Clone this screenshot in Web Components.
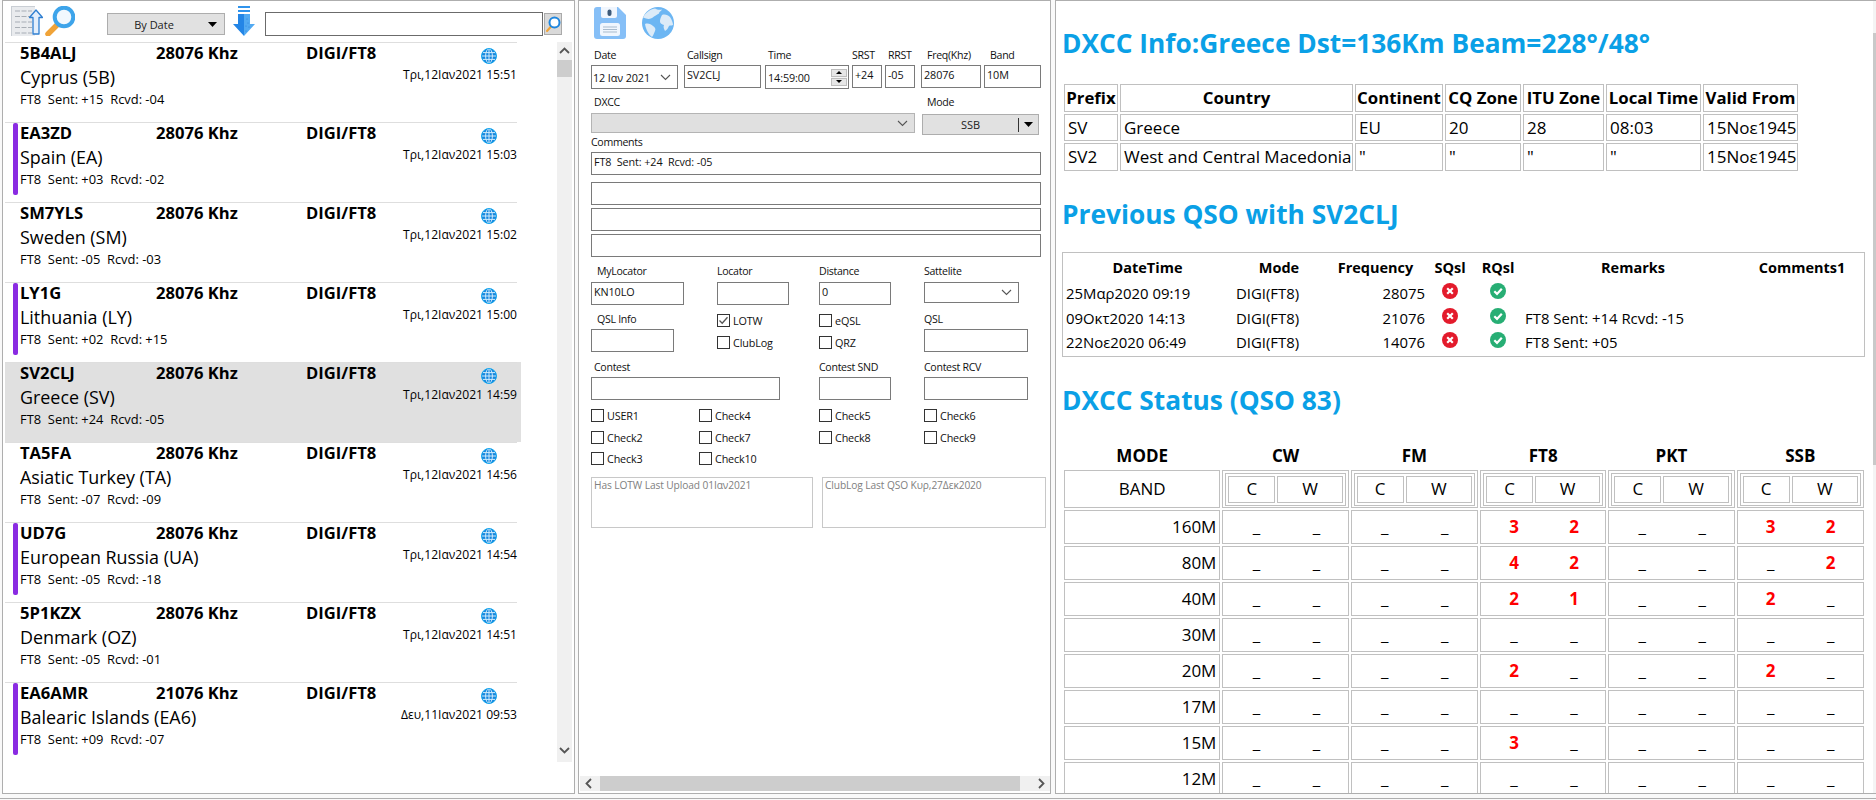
<!doctype html>
<html lang="el"><head><meta charset="utf-8"><title>QSO</title>
<style>
html,body{margin:0;padding:0}
body{width:1876px;height:800px;overflow:hidden;background:#f9f9f9;font-family:"Open Sans","Noto Sans","DejaVu Sans",sans-serif;color:#000}
</style></head><body>
<qso-app></qso-app>
<script>
const ICONS={
 globe:`<svg width="16" height="16" viewBox="0 0 16 16"><circle cx="8" cy="8" r="7.5" fill="#1587de"/><g fill="none" stroke="#cfeafc" stroke-width="1"><ellipse cx="8" cy="8" rx="3.4" ry="7.3"/><path d="M8 .5v15M.8 8h14.4M1.7 4.6h12.6M1.7 11.4h12.6"/></g><circle cx="8" cy="8" r="7.5" fill="none" stroke="#18a8ee" stroke-width="1"/></svg>`,
 doc:`<svg width="32" height="30" viewBox="0 0 32 30"><path d="M0 0h24v30H0z" fill="#e9ebee"/><path d="M0 0h24v1H0zM0 0h1v30H0z" fill="#c9ced4"/><g stroke="#a8aeb5" stroke-width="1.2" stroke-dasharray="5 1.5"><path d="M4 5h17M4 10.500h17M4 16h17M4 21.500h17M4 27h17"/></g><path d="M25 4l6.500 7.500h-3.500V28h-6V11.500h-3.500z" fill="#e3eefb" stroke="#2f7fd1" stroke-width="1.300" stroke-linejoin="round"/></svg>`,
 lens:`<svg width="30" height="30" viewBox="0 0 30 30"><path d="M3 28L12 19" stroke="#f0a338" stroke-width="5.500" stroke-linecap="round"/><circle cx="19" cy="11" r="9.300" fill="#f1f8fe" stroke="#3da4ea" stroke-width="4"/></svg>`,
 down:`<svg width="22" height="30" viewBox="0 0 22 30"><path d="M5 0h12v2H5zM5 4h12v2H5z" fill="#2f93ec"/><path d="M5 8h6v22L0 18h5z" fill="#2385e6"/><path d="M11 8h6v10h5L11 30z" fill="#52aaf2"/><g fill="#2f7fd8"><circle cx="14" cy="13" r=".6"/><circle cx="15" cy="17" r=".6"/><circle cx="13" cy="20" r=".6"/><circle cx="16" cy="21" r=".6"/><circle cx="13" cy="25" r=".6"/></g></svg>`,
 smalllens:`<svg width="16" height="18" viewBox="0 0 16 18"><path d="M2 16l4-4.500" stroke="#f0a338" stroke-width="2" stroke-linecap="round"/><circle cx="9.500" cy="7.500" r="5" fill="#fff" stroke="#1f86de" stroke-width="2"/></svg>`,
 save:`<svg width="32" height="32" viewBox="0 0 32 32"><path d="M3 0h21l8 8v21a3 3 0 0 1-3 3H3a3 3 0 0 1-3-3V3a3 3 0 0 1 3-3z" fill="#86bff7"/><path d="M7 0h16v9a2 2 0 0 1-2 2H9a2 2 0 0 1-2-2z" fill="#f0f6fe"/><rect x="13.500" y="2.500" width="4" height="6.500" rx="2" fill="#3d5a7a"/><rect x="6" y="16" width="20" height="13" rx="2.500" fill="#f0f6fe"/><path d="M9 20h14M9 22.500h14M9 25h14" stroke="#a9bbcd" stroke-width="1"/></svg>`,
 earth:`<svg width="32" height="32" viewBox="0 0 32 32"><circle cx="16" cy="16" r="16" fill="#6cb6f3"/><path d="M13 1.500c2 1.500 5 1.500 7 1-1 2-3 2-3 4-2 1-3 2-5 3-2 2-5 3-8 2-2-1-3-1-3-1 2-4 6-8 12-9zM20 8c3-1 6 0 8 2 2 3 3 6 3 8-2 1-3 0-4 1-1 2-2 4-4 5-1-2-2-4-1-6-2-1-4-1-4-4 0-2 1-4 2-6zM3 17c3-1 6 0 8 2 2 1 3 3 2 5-1 2-2 5-3 6-3-2-6-7-7-13z" fill="#dcebf8"/></svg>`,
 bad:`<svg width="16" height="16" viewBox="0 0 16 16"><circle cx="8" cy="8" r="8" fill="#e31b2c"/><path d="M5.200 5.200l5.600 5.600M10.800 5.200l-5.600 5.600" stroke="#fff" stroke-width="2.200"/></svg>`,
 good:`<svg width="16" height="16" viewBox="0 0 16 16"><circle cx="8" cy="8" r="8" fill="#27ae74"/><path d="M4.300 8.300l2.700 2.600 4.800-5.200" fill="none" stroke="#fff" stroke-width="2.200"/></svg>`,
 chev:`<svg width="11" height="7" viewBox="0 0 11 7"><path d="M1 1l4.500 4.500L10 1" fill="none" stroke="#555" stroke-width="1.100"/></svg>`,
 tri:`<svg width="9" height="5" viewBox="0 0 9 5"><path d="M0 0h9L4.500 5z" fill="#000"/></svg>`
};
const el=(n,css,html)=>customElements.define(n,class extends HTMLElement{
 connectedCallback(){ if(this.shadowRoot) return;
  const s=this.attachShadow({mode:'open'});
  for(const[a,p]of[['w','width'],['ml','marginLeft'],['mt','marginTop'],['h','height']]){if(this.hasAttribute(a))this.style[p]=this.getAttribute(a)+'px';}
  s.innerHTML=`<style>${css}</style>`+(typeof html==='function'?html(this):html);
 }});
const box=`box-sizing:border-box;flex:none;`;

el('f-label',`:host{display:block;${box}font-size:10.600px;letter-spacing:-.3px;line-height:16px;height:16px;white-space:nowrap;color:#111}`,'<slot></slot>');
el('t-box',`:host{display:block;${box}height:23px;border:1px solid #7a7a7a;background:#fff;font-size:10.800px;letter-spacing:-.1px;line-height:18px;padding-left:2px;white-space:nowrap;overflow:hidden;color:#111}`,'<slot></slot>');
el('f-combo',`:host{display:flex;align-items:center;justify-content:space-between;${box}height:24px;border:1px solid #7a7a7a;background:#fff;font-size:10.800px;letter-spacing:-.1px;padding:0 6px 0 1px;color:#111;white-space:nowrap}
 :host([flat]){background:#e0e0e0;border-color:#b4b4b4}svg{display:block}`,()=>`<span><slot></slot></span>${ICONS.chev}`);
el('f-time',`:host{display:flex;align-items:center;justify-content:space-between;${box}height:24px;border:1px solid #7a7a7a;background:#fff;font-size:10.800px;letter-spacing:-.1px;padding:0 1px 0 2px;color:#111}
 .sp{display:flex;flex-direction:column;gap:1px;width:16px;background:#f5f5f5}
 .sp i{display:flex;align-items:center;justify-content:center;height:8px;background:#e6e6e6;border:1px solid #bdbdbd;box-sizing:border-box}
 .up svg{transform:rotate(180deg)}svg{display:block}`,()=>`<span><slot></slot></span><div class="sp"><i class="up"><svg width="6" height="3" viewBox="0 0 6 3"><path d="M0 0h6L3 3z"/></svg></i><i><svg width="6" height="3" viewBox="0 0 6 3"><path d="M0 0h6L3 3z"/></svg></i></div>`);
el('f-drop',`:host{display:flex;align-items:center;${box}height:22px;border:1px solid #adadad;background:#e1e1e1;font-size:11px;color:#222}
 .t{flex:1;text-align:center}.sep{width:1px;height:14px;background:#333}.a{display:flex;justify-content:center}svg{display:block}`,
 t=>`<span class="t"><slot></slot></span>${t.hasAttribute('sep')?'<i class="sep"></i>':''}<span class="a" style="width:${t.getAttribute('aw')||24}px">${ICONS.tri}</span>`);
el('f-check',`:host{display:flex;align-items:center;${box}height:14px;font-size:10.800px;letter-spacing:-.15px;color:#111;white-space:nowrap}
 .b{box-sizing:border-box;width:13px;height:13px;border:1px solid #333;background:#fff;margin-right:3px;flex:none;display:flex}
 svg{display:block}`,t=>`<span class="b">${t.hasAttribute('checked')?'<svg width="11" height="11" viewBox="0 0 11 11"><path d="M1.500 5.500l2.700 2.700 5.300-6" fill="none" stroke="#555" stroke-width="1.300"/></svg>':''}</span><span><slot></slot></span>`);
el('f-area',`:host{display:block;${box}height:51px;border:1px solid #c8c8c8;background:#fff;font-size:10.200px;letter-spacing:-.1px;color:#808080;padding:0 2px;line-height:15px}`,'<slot></slot>');
el('f-row',`:host{display:flex;align-items:flex-start}`,'<slot></slot>');

el('v-scroll',`:host{display:flex;flex-direction:column;align-items:center;${box}width:15px;height:720px;background:#f0f0f0}
 .thumb{width:15px;height:17px;background:#cdcdcd;margin-top:1px}.sp{flex:1}svg{display:block}.u{margin-top:5px;height:12px}.d{height:15px}`,
 `<div class="u"><svg width="11" height="7" viewBox="0 0 11 7"><path d="M1 6l4.500-4.500L10 6" fill="none" stroke="#555" stroke-width="1.800"/></svg></div><div class="thumb"></div><div class="sp"></div><div class="d"><svg width="11" height="7" viewBox="0 0 11 7"><path d="M1 1l4.500 4.500L10 1" fill="none" stroke="#555" stroke-width="1.800"/></svg></div>`);
el('h-scroll',`:host{display:flex;align-items:center;${box}height:15px;background:#f0f0f0;margin:0 0 2px 1px}
 .thumb{width:420px;height:15px;background:#cdcdcd;margin-left:8px}.sp{flex:1}svg{display:block}.l{margin-left:5px}.r{margin-right:5px}`,
 `<div class="l"><svg width="7" height="11" viewBox="0 0 7 11"><path d="M6 1L1.500 5.500 6 10" fill="none" stroke="#555" stroke-width="1.800"/></svg></div><div class="thumb"></div><div class="sp"></div><div class="r"><svg width="7" height="11" viewBox="0 0 7 11"><path d="M1 1l4.500 4.500L1 10" fill="none" stroke="#555" stroke-width="1.800"/></svg></div>`);

el('qso-item',`:host{display:block;width:516px;height:80px;margin-left:2px;flex:none;overflow:hidden}
 :host([selected]){background:#e0e0e0}
 .line{height:1px;width:512px;background:#dedede}
 .in{display:flex;height:79px}
 .bar{width:5px;height:72px;margin-left:8px;border-radius:2px;flex:none}
 :host([mark]) .bar{background:#8a2be2}
 .m{margin-left:2px;flex:1;min-width:0}
 .r1{display:grid;grid-template-columns:136px 150px 1fr;font-weight:700;font-size:16.600px;line-height:19px;height:21px;white-space:nowrap}
 .r2{font-size:17.900px;line-height:26px;height:26px;white-space:nowrap}
 .r3{font-size:12.900px;line-height:18px;height:18px;white-space:pre}
 .d{width:130px;margin-right:4px;display:flex;flex-direction:column;align-items:flex-end}
 .g{margin:5px 20px 0 0;height:16px}.g svg{display:block}
 .t{font-size:12.100px;line-height:16px;margin-top:3px;white-space:nowrap}`,
 t=>`<div class="line"></div><div class="in"><div class="bar"></div><div class="m"><div class="r1"><span>${t.getAttribute('call')}</span><span>${t.getAttribute('freq')} Khz</span><span>DIGI/FT8</span></div><div class="r2">${t.getAttribute('dxcc')}</div><div class="r3">FT8  Sent: ${t.getAttribute('s')}  Rcvd: ${t.getAttribute('r')}</div></div><div class="d"><div class="g">${ICONS.globe}</div><div class="t">${t.getAttribute('date')}</div></div></div>`);

el('log-pane',`:host{display:flex;flex-direction:column;${box}width:573px;height:794px;border:1px solid #aeaeae;background:#fff;overflow:hidden}
 .tb{display:flex;align-items:flex-start;height:41px;flex:none}.tb svg{display:block}
 .i1{margin:5px 0 0 8px}.i2{margin:5px 0 0 2px}
 .i3{margin:5px 0 0 8px}.s{box-sizing:border-box;width:278px;height:24px;margin:11px 0 0 10px;border:1px solid #6b6b6b;background:#fff}
 .b{box-sizing:border-box;width:18px;height:22px;margin:12px 0 0 1px;background:#d9d9d9;border:1px solid #aaa;display:flex;align-items:center;justify-content:center}
 .body{display:flex;flex:none}.list{width:554px;display:flex;flex-direction:column}`,
 `<div class="tb"><span class="i1">${ICONS.doc}</span><span class="i2">${ICONS.lens}</span><f-drop w="118" ml="32" mt="12">By Date</f-drop><span class="i3">${ICONS.down}</span><div class="s"></div><div class="b">${ICONS.smalllens}</div></div>
 <div class="body"><div class="list"><slot></slot></div><v-scroll></v-scroll></div>`);

el('form-pane',`:host{display:flex;flex-direction:column;${box}width:473px;height:794px;margin-left:3px;border:1px solid #aeaeae;background:#fff;overflow:hidden}
 .f{flex:1;padding-left:12px}.ic{display:flex;padding:6px 0 0 3px;height:40px;box-sizing:border-box;gap:16px}.ic svg{display:block}`,
 `<div class="f"><div class="ic">${ICONS.save}${ICONS.earth}</div><slot></slot></div><h-scroll></h-scroll>`);

el('plain-table',`:host{display:block;${box}margin-left:-2px}
 table{border-collapse:separate;border-spacing:2px;table-layout:fixed;width:738px}
 td,th{box-sizing:border-box;border:1px solid #c0c0c0;padding:0 0 0 3px;font-size:17px;line-height:22px;white-space:nowrap;overflow:hidden;text-align:left}
 th{font-size:16.800px;text-align:center;padding:0;height:28px}td{height:27px}tr.l td{height:28px}`,
 `<table><colgroup><col style="width:54px"><col style="width:233px"><col style="width:88px"><col style="width:76px"><col style="width:81px"><col style="width:95px"><col style="width:95px"></colgroup>
 <tr><th>Prefix</th><th>Country</th><th>Continent</th><th>CQ Zone</th><th>ITU Zone</th><th>Local Time</th><th>Valid From</th></tr>
 <tr><td>SV</td><td>Greece</td><td>EU</td><td>20</td><td>28</td><td>08:03</td><td>15Νοε1945</td></tr>
 <tr class="l"><td>SV2</td><td>West and Central Macedonia</td><td>"</td><td>"</td><td>"</td><td>"</td><td>15Νοε1945</td></tr></table>`);

el('prev-table',`:host{display:block;${box}width:803px;height:105px;border:1px solid #c0c0c0;margin-left:-2px;padding-top:2px}
 table{border-collapse:collapse;table-layout:fixed;width:796px}
 th,td{box-sizing:border-box;padding:0;white-space:nowrap;overflow:hidden;height:24.500px;line-height:20px}
 th{font-size:14.500px;height:26px;text-align:center}
 td{font-size:14.900px;text-align:left}
 td.a{padding-left:3px}td.m{padding-left:4px}td.n{text-align:right}td.r{padding-left:4px}
 td.i{vertical-align:top;padding-top:2px}td.i svg{display:block;margin:0 auto}`,
 ()=>{const row=(d,f,r)=>`<tr><td class="a">${d}</td><td class="m">DIGI(FT8)</td><td class="n">${f}</td><td class="i">${ICONS.bad}</td><td class="i">${ICONS.good}</td><td class="r">${r}</td><td></td></tr>`;
 return `<table><colgroup><col style="width:169px"><col style="width:94px"><col style="width:99px"><col style="width:50px"><col style="width:46px"><col style="width:224px"><col style="width:114px"></colgroup>
 <tr><th>DateTime</th><th>Mode</th><th>Frequency</th><th>SQsl</th><th>RQsl</th><th>Remarks</th><th>Comments1</th></tr>`+row('25Μαρ2020 09:19','28075','')+row('09Οκτ2020 14:13','21076','FT8 Sent: +14 Rcvd: -15')+row('22Νοε2020 06:49','14076','FT8 Sent: +05')+`</table>`});

el('band-table',`:host{display:block;${box}margin-left:-2px}
 table{border-collapse:separate;border-spacing:2px;table-layout:fixed;width:804px}
 th{font-size:17px;height:24px;padding:0;line-height:22px}
 td{box-sizing:border-box;border:1px solid #c0c0c0;padding:0;height:34px;font-size:17px;line-height:22px}
 td.b{text-align:right;padding-right:3px}td.hb{text-align:center;height:38px}
 td.n{padding:1px 2px}
 .in{border-collapse:separate;border-spacing:2px;border:1px solid #c0c0c0;width:100%;table-layout:fixed;box-sizing:border-box}
 .in td{height:27px;text-align:center;line-height:20px}
 .v{display:grid;grid-template-columns:66px 54px;text-align:center}
 .v b{color:#f00}`,
 ()=>{const modes=['CW','FM','FT8','PKT','SSB'];
 const data=[['160M',{2:[3,2],4:[3,2]}],['80M',{2:[4,2],4:['_',2]}],['40M',{2:[2,1],4:[2,'_']}],['30M',{}],['20M',{2:[2,'_'],4:[2,'_']}],['17M',{}],['15M',{2:[3,'_']}],['12M',{}]];
 const v=x=>x==='_'?'<span>_</span>':`<b>${x}</b>`;
 return `<table><colgroup><col style="width:156px"><col style="width:126px"><col style="width:127px"><col style="width:126px"><col style="width:126px"><col style="width:127px"></colgroup>
 <tr><th>MODE</th>${modes.map(m=>`<th>${m}</th>`).join('')}</tr>
 <tr><td class="hb">BAND</td>${modes.map(()=>`<td class="n"><table class="in"><colgroup><col style="width:47px"><col></colgroup><tr><td>C</td><td>W</td></tr></table></td>`).join('')}</tr>`+
 data.map(([b,o])=>`<tr><td class="b">${b}</td>${modes.map((_,i)=>{const p=o[i]||['_','_'];return `<td><div class="v">${v(p[0])}${v(p[1])}</div></td>`}).join('')}</tr>`).join('')+`</table>`});

el('info-title',`:host{display:block;font-weight:700;font-size:26.300px;line-height:34px;height:34px;color:#0aa0e6;margin-left:-2px;white-space:nowrap}`,'<slot></slot>');
el('info-pane',`:host{display:flex;${box}width:821px;height:794px;margin-left:4px;border:1px solid #aeaeae;border-width:1px 0 1px 1px;background:#fff;overflow:hidden}
 .c{flex:1;min-width:0;overflow:hidden;padding:25px 0 0 8px}
 .s{width:3px;flex:none;background:#f4f4f4}.s i{display:block;height:432px;margin-top:32px;background:#c9c9c9}`,
 `<div class="c"><slot></slot></div><div class="s"><i></i></div>`);

el('qso-app',`:host{display:block;width:1876px;height:800px}
 .p{display:flex;padding-left:2px;height:794px}
 .e{height:1px;margin-top:4px;background:#aeaeae}`,
 ()=>`<div class="p">
 <log-pane>
  <qso-item call="5B4ALJ" freq="28076" dxcc="Cyprus (5B)" s="+15" r="-04" date="Τρι,12Ιαν2021 15:51"></qso-item>
  <qso-item mark call="EA3ZD" freq="28076" dxcc="Spain (EA)" s="+03" r="-02" date="Τρι,12Ιαν2021 15:03"></qso-item>
  <qso-item call="SM7YLS" freq="28076" dxcc="Sweden (SM)" s="-05" r="-03" date="Τρι,12Ιαν2021 15:02"></qso-item>
  <qso-item mark call="LY1G" freq="28076" dxcc="Lithuania (LY)" s="+02" r="+15" date="Τρι,12Ιαν2021 15:00"></qso-item>
  <qso-item selected call="SV2CLJ" freq="28076" dxcc="Greece (SV)" s="+24" r="-05" date="Τρι,12Ιαν2021 14:59"></qso-item>
  <qso-item call="TA5FA" freq="28076" dxcc="Asiatic Turkey (TA)" s="-07" r="-09" date="Τρι,12Ιαν2021 14:56"></qso-item>
  <qso-item mark call="UD7G" freq="28076" dxcc="European Russia (UA)" s="-05" r="-18" date="Τρι,12Ιαν2021 14:54"></qso-item>
  <qso-item call="5P1KZX" freq="28076" dxcc="Denmark (OZ)" s="-05" r="-01" date="Τρι,12Ιαν2021 14:51"></qso-item>
  <qso-item mark call="EA6AMR" freq="21076" dxcc="Balearic Islands (EA6)" s="+09" r="-07" date="Δευ,11Ιαν2021 09:53"></qso-item>
 </log-pane>
 <form-pane>
  <f-row mt="6"><f-label ml="3" w="93">Date</f-label><f-label w="81">Callsign</f-label><f-label w="84">Time</f-label><f-label w="36">SRST</f-label><f-label w="39">RRST</f-label><f-label w="63">Freq(Khz)</f-label><f-label w="40">Band</f-label></f-row>
  <f-row mt="2" h="24"><f-combo w="87">12 Ιαν 2021</f-combo><t-box ml="6" w="77">SV2CLJ</t-box><f-time ml="4" w="84">14:59:00</f-time><t-box ml="3" w="30">+24</t-box><t-box ml="3" w="30">-05</t-box><t-box ml="6" w="60">28076</t-box><t-box ml="3" w="57">10M</t-box></f-row>
  <f-row mt="5"><f-label ml="3" w="333">DXCC</f-label><f-label>Mode</f-label></f-row>
  <f-row mt="3" h="22"><f-combo flat w="324" h="20"></f-combo><f-drop ml="7" mt="1" w="117" h="21" sep aw="19">SSB</f-drop></f-row>
  <f-row h="14"><f-label style="height:14px;line-height:14px">Comments</f-label></f-row>
  <t-box mt="3" w="450"><span>FT8&nbsp; Sent: +24&nbsp; Rcvd: -05</span></t-box>
  <t-box mt="7" w="450"></t-box>
  <t-box mt="3" w="450"></t-box>
  <t-box mt="3" w="450"></t-box>
  <f-row mt="6"><f-label ml="6" w="120">MyLocator</f-label><f-label w="102">Locator</f-label><f-label w="105">Distance</f-label><f-label>Sattelite</f-label></f-row>
  <f-row mt="3" h="23"><t-box w="93">KN10LO</t-box><t-box ml="33" w="72"></t-box><t-box ml="30" w="72">0</t-box><f-combo ml="33" w="95" h="21"></f-combo></f-row>
  <f-row mt="6" h="16"><f-label ml="6" w="120">QSL Info</f-label><f-check checked w="102" mt="2">LOTW</f-check><f-check w="105" mt="2">eQSL</f-check><f-label>QSL</f-label></f-row>
  <f-row mt="2" h="23"><t-box w="83"></t-box><f-check ml="43" mt="6" w="102">ClubLog</f-check><f-check mt="6" w="105">QRZ</f-check><t-box w="104"></t-box></f-row>
  <f-row mt="7" h="16"><f-label ml="3" w="225">Contest</f-label><f-label w="105">Contest SND</f-label><f-label>Contest RCV</f-label></f-row>
  <f-row mt="2" h="23"><t-box w="189"></t-box><t-box ml="39" w="72"></t-box><t-box ml="33" w="104"></t-box></f-row>
  <f-row mt="8" h="14"><f-check w="108">USER1</f-check><f-check w="120">Check4</f-check><f-check w="105">Check5</f-check><f-check>Check6</f-check></f-row>
  <f-row mt="8" h="14"><f-check w="108">Check2</f-check><f-check w="120">Check7</f-check><f-check w="105">Check8</f-check><f-check>Check9</f-check></f-row>
  <f-row mt="7" h="14"><f-check w="108">Check3</f-check><f-check w="120">Check10</f-check></f-row>
  <f-row mt="12"><f-area w="222">Has LOTW Last Upload 01Ιαν2021</f-area><f-area ml="9" w="224">ClubLog Last QSO Κυρ,27Δεκ2020</f-area></f-row>
 </form-pane>
 <info-pane>
  <info-title>DXCC Info:Greece Dst=136Km Beam=228°/48°</info-title>
  <plain-table mt="22"></plain-table>
  <info-title mt="24">Previous QSO with SV2CLJ</info-title>
  <prev-table mt="21"></prev-table>
  <info-title mt="26">DXCC Status (QSO 83)</info-title>
  <band-table mt="25"></band-table>
 </info-pane>
 </div><div class="e"></div>`);
</script>
</body></html>
